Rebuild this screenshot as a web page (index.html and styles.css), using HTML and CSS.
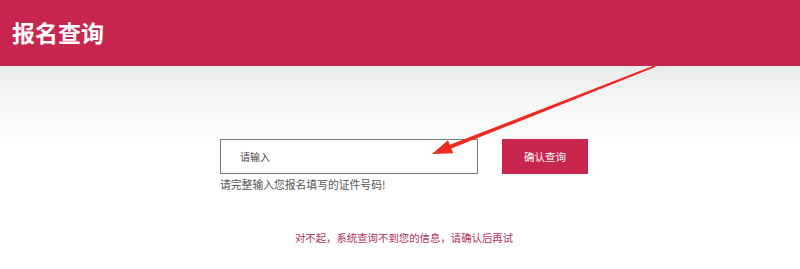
FILE: index.html
```html
<!DOCTYPE html>
<html lang="zh-CN">
<head>
<meta charset="utf-8">
<title>报名查询</title>
<link rel="stylesheet" href="styles.css">
</head>
<body>
<header class="top">
  <h1 class="title">报名查询</h1>
</header>
<main class="main">
  <div class="query">
    <div class="row">
      <input class="field" type="text" placeholder="请输入">
      <button class="btn" type="button">确认查询</button>
    </div>
    <p class="hint">请完整输入您报名填写的证件号码!</p>
  </div>
  <p class="error">对不起，系统查询不到您的信息，请确认后再试</p>
</main>
<svg class="arrow" width="800" height="269" viewBox="0 0 800 269" aria-hidden="true">
  <polygon fill="#ec2a20" points="432,154 448,140.2 449.9,144.8 654.6,65.3 655.4,66.9 451.3,148.6 453.2,153.2"/>
</svg>
</body>
</html>
```

FILE: styles.css
```css
html, body {
  margin: 0;
  padding: 0;
  background: #fff;
  font-family: "Microsoft YaHei", "Noto Sans CJK SC", "Noto Sans", sans-serif;
}

.top {
  height: 66px;
  background: #c9264f;
  display: flex;
  align-items: center;
  padding-left: 12px;
}

.title {
  margin: 0;
  color: #fff;
  font-size: 23px;
  font-weight: bold;
  letter-spacing: 0;
  line-height: 1;
  margin-top: -2px;
}

.main {
  height: 203px;
  background: linear-gradient(#ebebeb 0, #f6f6f6 35px, #fff 80px);
  padding-top: 73px;
  padding-left: 8px;
  box-sizing: border-box;
  display: flex;
  flex-direction: column;
  align-items: center;
}

.query {
  width: 368px;
}

.row {
  display: flex;
  gap: 24px;
}

.field {
  width: 258px;
  height: 35px;
  box-sizing: border-box;
  border: 1px solid #777;
  background: #fff;
  padding: 0 0 0 19px;
  font-family: inherit;
  font-size: 10px;
  color: #333;
  outline: none;
}

.field::placeholder {
  color: #444;
}

.btn {
  width: 86px;
  height: 35px;
  border: 0;
  background: #c9264f;
  color: #fff;
  font-family: inherit;
  font-size: 10.5px;
  padding: 0;
  cursor: pointer;
}

.hint {
  margin: 3px 0 0 0;
  font-size: 10.8px;
  line-height: 15px;
  color: #555;
}

.error {
  margin: 39px 0 0 0;
  font-size: 10.4px;
  line-height: 14px;
  color: #b2305a;
}

.arrow {
  position: absolute;
  left: 0;
  top: 0;
  pointer-events: none;
}
```
